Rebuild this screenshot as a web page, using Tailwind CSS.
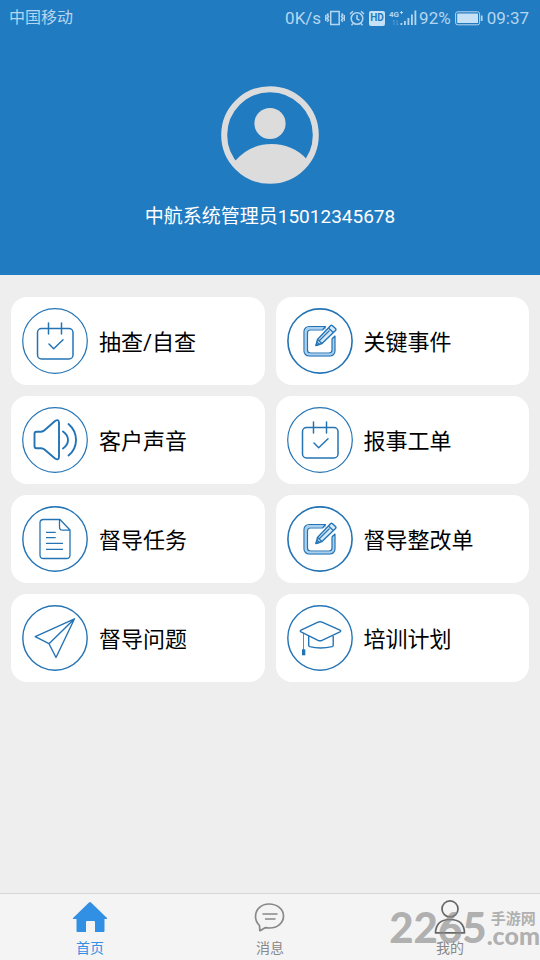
<!DOCTYPE html>
<html lang="zh-CN">
<head>
<meta charset="utf-8">
<meta name="viewport" content="width=device-width, initial-scale=1">
<title>首页</title>
<script src="https://cdn.jsdelivr.net/npm/@tailwindcss/browser@4"></script>
</head>
<body class="min-h-screen flex flex-col bg-[#eeeeee] text-black font-[Roboto,'Noto_Sans_CJK_SC',sans-serif]">

<!-- Shared icons -->
<svg class="hidden" aria-hidden="true">
  <symbol id="calendar" viewBox="0 0 66 66">
    <circle cx="33" cy="33" r="32.3" stroke-width="1.2"/>
    <rect x="15.5" y="20.5" width="35.5" height="30.5" rx="4" stroke-width="1.5"/>
    <path d="M26.5 15v11M39.5 15v11M27 36l4.700 4.700 9.300-9" stroke-width="1.5"/>
  </symbol>
  <symbol id="edit" viewBox="0 0 66 66">
    <circle cx="33" cy="33" r="32.100" stroke-width="1.600"/>
    <path d="M39 20H23.500a4.500 4.500 0 0 0-4.500 4.500v18a4.500 4.500 0 0 0 4.500 4.500h18.500a4.500 4.500 0 0 0 4.500-4.500V29" stroke="#a9d0ee" stroke-width="3"/>
    <path d="M38.500 18.500H22a5 5 0 0 0-5 5v19.500a5 5 0 0 0 5 5h21a5 5 0 0 0 5-5V28l-3 3v11a3 3 0 0 1-3 3H23.500a3 3 0 0 1-3-3V25a3 3 0 0 1 3-3H35.500z" stroke-width="1.200"/>
    <path d="M29 37.500l1.500-6L43.500 17.800q1-1 2 0l3 2.800q1 1 0 2L35 35.500z" fill="#d6e9f8" stroke-width="1.400"/>
    <path d="M30.500 31.500l4.500 4M41.500 20l4.800 4.500M32.500 32.500l10-10M29 37.500l1-3.500 2.500 2.500z" stroke-width="1.200"/>
  </symbol>
  <symbol id="speaker" viewBox="0 0 66 66">
    <circle cx="33" cy="33" r="32.300" stroke-width="1.200"/>
    <path d="M14.500 24.700H19q2 0 3.500-1.400L33 14q4-2.500 4 2V49.500q0 4.500-4 2L22.500 42.500Q21 41.200 19 41.200H14.500q-2 0-2-2V26.700q0-2 2-2z" stroke-width="1.900"/>
    <path d="M41 24.500q5 3.500 5 8.500t-5 8.500M46.500 17q7.500 6.500 7.500 16t-7.500 15.500" stroke-width="1.900"/>
  </symbol>
  <symbol id="document" viewBox="0 0 66 66">
    <circle cx="33" cy="33" r="32.200" stroke-width="1.400"/>
    <path d="M38 13.500H21.500q-3.500 0-3.500 3.500V49q0 3.500 3.500 3.500h23q3.500 0 3.500-3.500V24zM37.500 13.500V21q0 3.200 3.200 3.200H48M24 26.300h9.700M24 31.700h9.700M24 37.300h17M24 43.300h17" stroke-width="1.300"/>
  </symbol>
  <symbol id="plane" viewBox="0 0 66 66">
    <circle cx="33" cy="33" r="32.200" stroke-width="1.400"/>
    <path d="M52.500 13.800L13.200 31.600 27 38.700 34 52.500zM52.500 13.800L27 38.700" stroke-width="1.400"/>
  </symbol>
  <symbol id="graduation" viewBox="0 0 66 66">
    <circle cx="33" cy="33" r="32.200" stroke-width="1.400"/>
    <path d="M31 17.100q2-.8 4 0l18 8.100q1.500.8 0 1.600L35 35.300q-2 .9-4 0L14 26.800q-1.500-.8 0-1.600z" stroke-width="1.400"/>
    <path d="M21.700 31v9.500q0 .8 1 1.100 10.500 2.800 22.500 0 1-.3 1-1.100V31" stroke-width="1.400"/>
    <path d="M16.500 28v17" stroke-width=".8"/>
    <path d="M15 44.300h3.300v6H15z" fill="currentColor" stroke="none"/>
  </symbol>
</svg>

<header class="bg-[#217bc1] pb-11">
  <div class="flex h-9 items-center justify-between pr-[11px] pl-[9px] text-[17px] leading-6 text-[#b5d6f0]">
    <span class="text-base">中国移动</span>
    <div class="flex items-center gap-1">
      <span>0K/s</span>
      <svg class="h-4 w-5" viewBox="0 0 20 16" fill="none" stroke="currentColor" stroke-width="1.500" aria-label="振动">
        <rect x="5.700" y="1.500" width="8.500" height="13"/>
        <path d="M3.500 3.500l-1.200 1.200 1.200 1.800-1.200 1.800 1.200 1.800-1.200 1.800M.8 5v6M16.500 3.500l1.200 1.200-1.200 1.800 1.200 1.800-1.200 1.800 1.200 1.800M19.300 5v6"/>
      </svg>
      <svg class="h-4 w-4" viewBox="0 0 16 16" fill="none" stroke="currentColor" stroke-width="1.500" aria-label="闹钟">
        <circle cx="8" cy="8.500" r="5.800"/><path d="M8 5v3.800l2.500 1.500M1 4l3-2.800M15 4l-3-2.800M4 13.500l-1.500 1.700M12 13.500l1.500 1.700"/>
      </svg>
      <span class="flex h-[15px] w-4 items-center justify-center rounded-xs bg-[#c6e0f5] text-[10px] leading-3 font-bold text-[#217bc1]">HD</span>
      <div class="flex items-center">
        <svg class="h-[18px] w-7" viewBox="0 0 28 18" fill="currentColor" aria-label="信号">
          <text x="0" y="8" font-size="8" font-weight="700">4G</text>
          <path d="M11 3h1V2h1v1h1v1h-1v1h-1V4h-1zM11.500 14h1.800v2h-1.800zM15 12h1.800v4H15zM18.500 9h1.800v7h-1.800zM22 5.500h1.800V16H22zM25.500 1.500h1.800V16h-1.800z"/>
          <path d="M5 16v-5l-1.200 1.200M8 11v5l1.200-1.200" fill="none" stroke="currentColor" stroke-width=".8" opacity=".4"/>
        </svg>
        <span class="pl-[2px]">92%</span>
      </div>
      <svg class="h-[15px] w-7" viewBox="0 0 28 15" fill="none" stroke="currentColor" aria-label="电量">
        <rect x=".6" y=".8" width="24" height="13" rx="2"/><rect x="2.200" y="2.500" width="20.800" height="9.600" rx=".5" fill="#c6e0f5" stroke="none"/><path d="M26.700 4.500v5.500" stroke-width="1.800"/>
      </svg>
      <span>09:37</span>
    </div>
  </div>
  <div class="flex flex-col items-center gap-[19px] pt-[50px]">
    <svg class="size-[98px] text-[#dcdcdc]" viewBox="0 0 98 98" fill="currentColor" aria-label="头像">
      <circle cx="49" cy="49" r="45.800" fill="none" stroke="currentColor" stroke-width="6"/>
      <circle cx="49" cy="37.500" r="15.600"/>
      <path d="M14 75Q29 58 50.500 58T86 73.500A45.500 45.500 0 0 1 49 95 45.500 45.500 0 0 1 14 75z"/>
    </svg>
    <h1 class="text-[19px] leading-7 text-white">中航系统管理员15012345678</h1>
  </div>
</header>

<main class="flex-1 px-[11px] pt-[22px] pb-6">
  <nav class="grid grid-cols-2 gap-[11px] text-[22px] leading-8 [&_span]:pt-1 [&_svg]:size-[66px] [&_svg]:shrink-0 [&_svg]:fill-none [&_svg]:stroke-current [&_svg]:text-[#2474b5]" aria-label="功能">
    <a href="#spot-check" class="flex h-[88px] items-center gap-[11px] rounded-2xl bg-white px-[11px]"><svg stroke-linecap="round" stroke-linejoin="round"><use href="#calendar"/></svg><span>抽查/自查</span></a>
    <a href="#key-events" class="flex h-[88px] items-center gap-[11px] rounded-2xl bg-white px-[11px]"><svg stroke-linejoin="round"><use href="#edit"/></svg><span>关键事件</span></a>
    <a href="#voice" class="flex h-[88px] items-center gap-[11px] rounded-2xl bg-white px-[11px]"><svg stroke-linecap="round" stroke-linejoin="round"><use href="#speaker"/></svg><span>客户声音</span></a>
    <a href="#work-orders" class="flex h-[88px] items-center gap-[11px] rounded-2xl bg-white px-[11px]"><svg stroke-linecap="round" stroke-linejoin="round"><use href="#calendar"/></svg><span>报事工单</span></a>
    <a href="#tasks" class="flex h-[88px] items-center gap-[11px] rounded-2xl bg-white px-[11px]"><svg stroke-linejoin="round"><use href="#document"/></svg><span>督导任务</span></a>
    <a href="#rectification" class="flex h-[88px] items-center gap-[11px] rounded-2xl bg-white px-[11px]"><svg stroke-linejoin="round"><use href="#edit"/></svg><span>督导整改单</span></a>
    <a href="#issues" class="flex h-[88px] items-center gap-[11px] rounded-2xl bg-white px-[11px]"><svg stroke-linejoin="round"><use href="#plane"/></svg><span>督导问题</span></a>
    <a href="#training" class="flex h-[88px] items-center gap-[11px] rounded-2xl bg-white px-[11px]"><svg stroke-linejoin="round"><use href="#graduation"/></svg><span>培训计划</span></a>
  </nav>
</main>

<footer class="relative border-t border-[#d6d6d6] bg-[#f4f4f4]">
  <nav class="grid grid-cols-3 pt-[6px] text-sm leading-5 text-[#888888]" aria-label="主导航">
    <a href="#home" class="flex flex-col items-center gap-1 pb-[2px] text-[#3290e4]" aria-current="page">
      <svg class="h-[34px] w-9" viewBox="0 0 36 34" fill="currentColor"><path d="M18 2q.5 0 1 .5l16 15.500q.7.900-.5.900H32.500V31q0 1-1 1H23V22q0-1-1-1h-7q-1 0-1 1v10H5.500q-1 0-1-1V18.900H1.500q-1.200 0-.5-.9L17 2.500q.5-.5 1-.5z"/></svg>
      <span>首页</span>
    </a>
    <a href="#messages" class="flex flex-col items-center gap-1 pb-[2px]">
      <svg class="h-[34px] w-9" viewBox="0 0 36 34" fill="none" stroke="currentColor" stroke-width="1.700" stroke-linejoin="round"><path d="M7.500 25.500C5 23 3.500 20 3.500 16.500 3.500 9.500 9 4 17 4s14.500 5 14.500 12-6 12-14 12c-1.500 0-2.500 0-4-.4L8.500 30.500c-.8.300-.9.200-.7-.5z"/><path d="M10.500 14h15M13 19h10.500"/></svg>
      <span>消息</span>
    </a>
    <a href="#mine" class="flex flex-col items-center gap-1 pb-[2px]">
      <svg class="h-[34px] w-9" viewBox="0 0 36 34" fill="none" stroke="#666666" stroke-width="1.700" stroke-linejoin="round"><circle cx="18" cy="8.900" r="8"/><path d="M3.500 32.800Q4 19.500 18 19.500t14.500 13.300z"/></svg>
      <span>我的</span>
    </a>
  </nav>
  <div class="pointer-events-none absolute inset-y-0 right-0 flex items-center font-bold text-[#888888]/65" aria-hidden="true">
    <span class="font-[Lato,sans-serif] text-[42px] leading-10 font-black">2265</span>
    <div class="flex flex-col">
      <span class="pl-1 text-[15px] leading-4">手游网</span>
      <span class="font-[Lato,sans-serif] text-[25px] leading-4 font-black">.com</span>
    </div>
  </div>
</footer>
</body>
</html>
